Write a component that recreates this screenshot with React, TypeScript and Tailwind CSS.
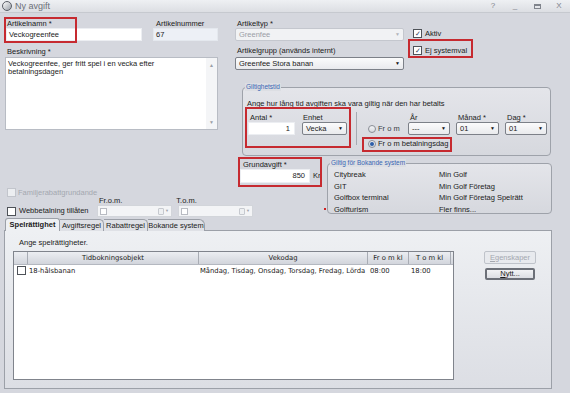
import React from 'react';

const Check = ({ checked = false, disabled = false }: { checked?: boolean; disabled?: boolean }) => (
  <div
    className={`w-[9px] h-[9px] shrink-0 border flex items-center justify-center text-[7px] leading-none ${
      disabled ? 'border-[#c2c5cc] bg-[#eceef1]' : 'border-[#4e5258] bg-white'
    }`}
  >
    {checked ? <span className="text-[#2a3a5a]">✓</span> : null}
  </div>
);

const Radio = ({ on = false }: { on?: boolean }) => (
  <div className="w-[8px] h-[8px] shrink-0 rounded-full border border-[#8a8e96] bg-gradient-to-b from-[#f4f5f7] to-[#d6d9de] flex items-center justify-center">
    {on ? <div className="w-[4px] h-[4px] rounded-full bg-[#2c5da8]" /> : null}
  </div>
);

const Combo = ({ w, value, disabled = false }: { w: string; value: string; disabled?: boolean }) => (
  <div
    className={`${w} h-[13px] shrink-0 flex items-center justify-between pl-[3px] pr-[3px] rounded-[2px] border ${
      disabled
        ? 'border-[#c4c7ce] bg-[#f1f2f4] text-[#9a9ea6]'
        : 'border-[#7c8088] bg-gradient-to-b from-[#fbfbfc] to-[#e9eaed] text-[#1a1a1a]'
    }`}
  >
    <span>{value}</span>
    <span className={`text-[5px] leading-none ${disabled ? 'text-[#b0b3ba]' : 'text-[#111]'}`}>▼</span>
  </div>
);

const DatePick = () => (
  <div className="w-[75px] h-[12px] shrink-0 flex items-center justify-between px-[2px] bg-[#f3f4f6] border border-[#d2d5da]">
    <div className="w-[7px] h-[7px] border border-[#b8bbc2] bg-white" />
    <div className="flex items-center gap-[1px]">
      <div className="w-[6px] h-[7px] border border-[#c6c9cf] bg-[#eef0f2] rounded-[1px]" />
      <span className="text-[4px] text-[#a0a3aa]">▼</span>
    </div>
  </div>
);

const RedBox = ({ cls }: { cls: string }) => (
  <div className={`absolute border-[2px] border-[#c62a30] pointer-events-none ${cls}`} />
);

export default function App() {
  return (
    <div className="relative w-[570px] h-[393px] overflow-hidden bg-[#d5d7de] text-[7.5px] leading-[8px] text-[#1b1b1b] font-['Liberation_Sans',Arial,sans-serif]">
      {/* title bar */}
      <div className="h-[13px] flex items-center bg-gradient-to-b from-[#eef0f3] to-[#dcdee3] border-b border-[#c6c9cf]">
        <div className="ml-[2px] w-[10px] h-[10px] rounded-full border border-[#5a5e66] bg-gradient-to-br from-white to-[#9aa0a8]" />
        <span className="ml-[3px] text-[9px] text-[#6c7078]">Ny avgift</span>
        <div className="ml-auto flex items-center text-[8px] text-[#80848c]">
          <span className="w-[22px] text-center">?</span>
          <span className="w-[22px] text-center">_</span>
          <span className="w-[22px] flex justify-center">
            <span className="w-[7px] h-[5px] border border-[#80848c] border-t-[2px]" />
          </span>
          <span className="w-[22px] text-center">X</span>
        </div>
      </div>

      {/* top section */}
      <div className="flex pt-[7px]">
        <div className="w-[218px] shrink-0 pl-[6px]">
          <div className="flex">
            <div className="w-[136px]">
              <div className="pl-[1px]">Artikelnamn *</div>
              <div className="h-[13px] bg-white border border-[#eceef2] flex items-center pl-[2px]">Veckogreenfee</div>
            </div>
            <div className="ml-[11px] w-[65px]">
              <div className="pl-[3px]">Artikelnummer</div>
              <div className="h-[13px] bg-[#edf0f6] border border-[#e4e8ee] flex items-center pl-[2px]">67</div>
            </div>
          </div>
          <div className="mt-[7px] pl-[1px]">Beskrivning *</div>
          <div className="mt-[1px] -ml-[1px] h-[73px] bg-white border border-[#b8bcc4] flex">
            <div className="flex-1 px-[2px] pt-[2px]">
              Veckogreenfee, ger fritt spel i en vecka efter
              <br />
              betalningsdagen
            </div>
            <div className="w-[11px] flex flex-col justify-between items-center py-[3px] bg-[#f4f5f7] text-[5px] text-[#9a9ea6]">
              <span>▲</span>
              <span>▼</span>
            </div>
          </div>
        </div>

        <div className="ml-[17px] w-[318px]">
          <div className="flex">
            <div className="w-[169px]">
              <div className="pl-[2px]">Artikeltyp *</div>
              <Combo w="w-[169px]" value="Greenfee" disabled />
              <div className="mt-[6px] pl-[2px]">Artikelgrupp (används internt)</div>
              <div className="mt-[2px]">
                <Combo w="w-[169px]" value="Greenfee Stora banan" />
              </div>
            </div>
            <div className="ml-[9px] pt-[9px] flex flex-col">
              <div className="flex items-center gap-[3px]">
                <Check checked />
                <span>Aktiv</span>
              </div>
              <div className="mt-[8px] flex items-center gap-[3px]">
                <Check checked />
                <span>Ej systemval</span>
              </div>
            </div>
          </div>

          {/* Giltighetstid */}
          <div className="relative mt-[17px] ml-[7px] w-[309px] h-[69px] rounded-[4px] border border-[#9ea2aa] bg-gradient-to-b from-[#e4e5ea] to-[#d6d8de]">
            <span className="absolute -top-[5px] left-[2px] px-[1px] bg-[#dcdee3] text-[#3a66b4] text-[6.5px]">Giltighetstid</span>
            <div className="pt-[12px] pl-[4px]">Ange hur lång tid avgiften ska vara giltig när den har betalts</div>
            <div className="flex mt-[6px] pl-[5px]">
              <div className="w-[47px]">
                <div className="pl-[2px]">Antal *</div>
                <div className="h-[13px] bg-white border border-[#eceef2] flex items-center justify-end pr-[4px]">1</div>
              </div>
              <div className="ml-[7px]">
                <div className="pl-[1px]">Enhet</div>
                <Combo w="w-[45px]" value="Vecka" />
              </div>
              <div className="ml-[9px] -mt-[2px] w-[1px] h-[33px] bg-[#a6aab2]" />
              <div className="ml-[11px] flex flex-col">
                <div className="flex">
                  <div className="w-[40px] pt-[8px] h-[21px] flex items-center gap-[1px] text-[#3a3e46]">
                    <Radio />
                    <span className="ml-[1px]">Fr o m</span>
                  </div>
                  <div className="w-[42px]">
                    <div className="pl-[2px]">År</div>
                    <Combo w="w-[42px]" value="---" />
                  </div>
                  <div className="ml-[6px] w-[43px]">
                    <div className="pl-[2px]">Månad *</div>
                    <Combo w="w-[43px]" value="01" />
                  </div>
                  <div className="ml-[6px] w-[42px]">
                    <div className="pl-[2px]">Dag *</div>
                    <Combo w="w-[42px]" value="01" />
                  </div>
                </div>
                <div className="mt-[5px] flex items-center gap-[2px]">
                  <Radio on />
                  <span>Fr o m betalningsdag</span>
                </div>
              </div>
            </div>
          </div>
        </div>
      </div>

      {/* second section */}
      <div className="flex">
        <div className="w-[327px] shrink-0">
          <div className="ml-[240px] mt-[5px]">
            <div className="pl-[3px]">Grundavgift *</div>
            <div className="flex items-center">
              <div className="w-[70px] h-[14px] bg-white border border-[#eceef2] flex items-center justify-end pr-[4px]">850</div>
              <span className="ml-[3px]">Kr</span>
            </div>
          </div>
          <div className="mt-[5px] ml-[7px] flex items-center gap-[2px] text-[#a4a8b0]">
            <Check disabled />
            <span>Familjerabattgrundande</span>
          </div>
          <div className="flex h-[8px]">
            <span className="ml-[99px]">Fr.o.m.</span>
            <span className="ml-[54px]">T.o.m.</span>
          </div>
          <div className="flex items-center h-[12px]">
            <div className="w-[97px] pl-[7px] flex items-center gap-[3px]">
              <Check />
              <span>Webbetalning tillåten</span>
            </div>
            <DatePick />
            <div className="ml-[6px]">
              <DatePick />
            </div>
          </div>
        </div>
        <div className="relative mt-[7px] w-[225px] h-[51px] rounded-[4px] border border-[#9ea2aa] bg-gradient-to-b from-[#e4e5ea] to-[#d6d8de]">
          <span className="absolute -top-[5px] left-[2px] px-[1px] bg-[#dcdee3] text-[#3a66b4] text-[6.5px]">Giltig för Bokande system</span>
          <div className="grid grid-cols-[105px_1fr] pl-[6px] pt-[5px] leading-[11.5px]">
            <span>Citybreak</span>
            <span>Min Golf</span>
            <span>GIT</span>
            <span>Min Golf Företag</span>
            <span>Golfbox terminal</span>
            <span>Min Golf Företag Spelrätt</span>
            <span>Golfturism</span>
            <span>Fler finns...</span>
          </div>
          <div className="absolute left-[-4px] top-[44px] w-[2px] h-[2px] bg-[#d02020]" />
        </div>
      </div>

      {/* tabs */}
      <div className="flex items-end h-[13px] ml-[5px] mt-[1px]">
        <div className="h-[13px] w-[55px] flex items-center justify-center font-bold bg-[#eef0f3] border border-b-0 border-[#9ca0a8] rounded-t-[3px] relative z-10">
          Spelrättighet
        </div>
        <div className="h-[12px] w-[44px] flex items-center justify-center bg-[#dfe1e6] border border-l-0 border-b-0 border-[#9ca0a8] rounded-tr-[5px]">
          Avgiftsregel
        </div>
        <div className="h-[12px] w-[44px] flex items-center justify-center bg-[#dfe1e6] border border-l-0 border-b-0 border-[#9ca0a8] rounded-tr-[5px]">
          Rabattregel
        </div>
        <div className="h-[12px] w-[57px] flex items-center justify-center bg-[#dfe1e6] border border-l-0 border-b-0 border-[#9ca0a8] rounded-tr-[6px]">
          Bokande system
        </div>
      </div>
      <div className="ml-[4px] w-[548px] h-[159px] -mt-[1px] border border-[#9ca0a8] bg-gradient-to-b from-[#eef0f3] to-[#dcdee4]">
        <div className="pt-[8px] pl-[14px]">Ange spelrättigheter.</div>
        <div className="flex mt-[4px]">
          <div className="ml-[8px] w-[441px] h-[129px] bg-white border border-[#80848c] font-['DejaVu_Sans',sans-serif] text-[6.8px]">
            <div className="flex h-[13px] bg-gradient-to-b from-[#eceef2] to-[#d2d5dc] border-b border-[#b4b8c0] text-center">
              <div className="w-[14px] border-r border-[#a8acb4]" />
              <div className="w-[171px] border-r border-[#a8acb4] flex items-center justify-center">Tidbokningsobjekt</div>
              <div className="w-[169px] border-r border-[#a8acb4] flex items-center justify-center">Vekodag</div>
              <div className="w-[41px] border-r border-[#a8acb4] flex items-center justify-center">Fr o m kl</div>
              <div className="w-[42px] border-r border-[#a8acb4] flex items-center justify-center">T o m kl</div>
            </div>
            <div className="flex h-[11px] items-center">
              <div className="w-[14px] flex justify-center">
                <Check />
              </div>
              <div className="w-[171px] pl-[1px]">18-hålsbanan</div>
              <div className="w-[169px] pl-[1px] whitespace-nowrap overflow-hidden">Måndag, Tisdag, Onsdag, Torsdag, Fredag, Lörda</div>
              <div className="w-[41px] pl-[2px]">08:00</div>
              <div className="w-[42px] pl-[2px]">18:00</div>
            </div>
          </div>
          <div className="ml-[30px] flex flex-col">
            <div className="w-[52px] h-[13px] flex items-center justify-center rounded-[2px] border border-[#bfc3ca] bg-[#e8eaee] text-[#a4a8b0]">
              <span>
                <span className="underline">E</span>genskaper
              </span>
            </div>
            <div className="mt-[4px] ml-[1px] w-[50px] h-[12px] flex items-center justify-center rounded-[2px] border-[2px] border-[#6c7078] bg-gradient-to-b from-[#f2f3f5] to-[#dcdee3]">
              <span>
                <span className="underline">N</span>ytt...
              </span>
            </div>
          </div>
        </div>
      </div>

      {/* red annotation boxes */}
      <RedBox cls="left-[4px] top-[17px] w-[73px] h-[26px]" />
      <RedBox cls="left-[408px] top-[39px] w-[65px] h-[19px]" />
      <RedBox cls="left-[245px] top-[107px] w-[106px] h-[41px]" />
      <RedBox cls="left-[362px] top-[137px] w-[90px] h-[15px]" />
      <RedBox cls="left-[238px] top-[157px] w-[84px] h-[30px]" />
    </div>
  );
}
